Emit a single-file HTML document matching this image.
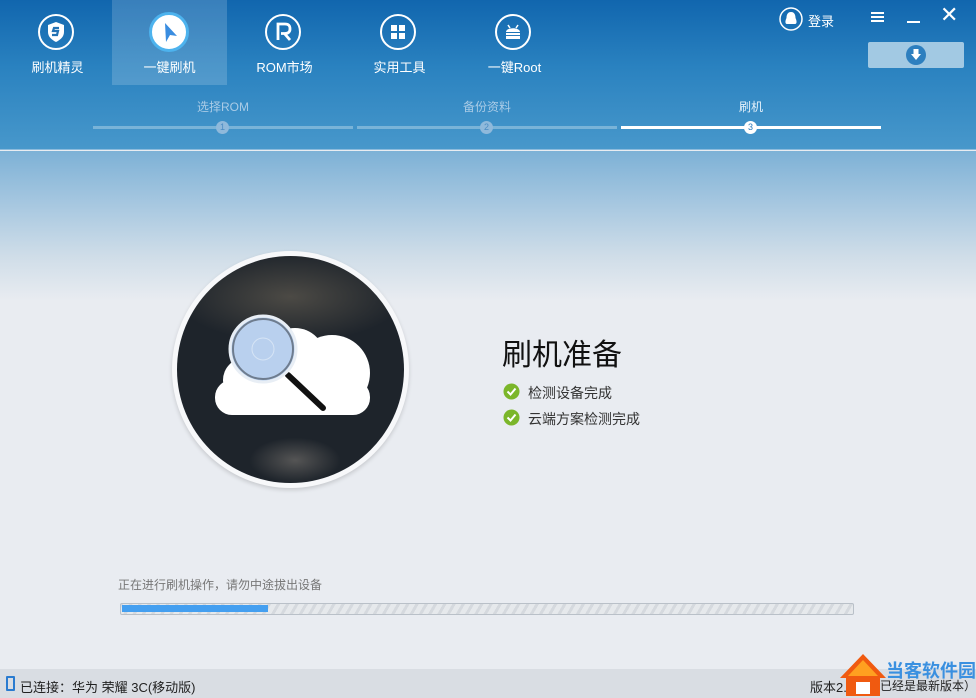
<!DOCTYPE html>
<html><head><meta charset="utf-8"><style>
*{margin:0;padding:0;box-sizing:border-box}
html,body{width:976px;height:698px;overflow:hidden}
body{font-family:"Liberation Sans","Noto Sans CJK SC",sans-serif;background:#e9ecf1;position:relative;white-space:nowrap}
#hdr{position:absolute;left:0;top:0;width:976px;height:150px;background:linear-gradient(180deg,#1166ae 0%,#2a82c0 45%,#4898cb 100%)}
#hdr:after{content:"";position:absolute;left:0;right:0;bottom:0;height:1px;background:#8cbbdc}
#sky{position:absolute;left:0;top:151px;width:976px;height:150px;background:linear-gradient(180deg,#7db1d6 0%,#a6c7e0 35%,#cfdde8 70%,#e9ecf1 100%)}
.nav{position:absolute;top:0;width:115px;height:85px;text-align:center;color:#fff;font-size:13px}
.nav.act{background:rgba(255,255,255,.17)}
.nav .ic{position:absolute;left:38px;top:14px;width:36px;height:36px;border:2px solid #fff;border-radius:50%}
.nav .lb{position:absolute;left:0;right:0;top:57px}
.step{position:absolute;top:98px;font-size:12px;color:#a9cbe6;text-align:center;width:260px}
.bar{position:absolute;top:126px;height:3px;background:rgba(255,255,255,.3)}
.dot{position:absolute;top:121px;width:13px;height:13px;border-radius:50%;background:#8fb9db;color:#4b8cc3;font-size:9px;text-align:center;line-height:13px}
#foot{position:absolute;left:0;top:669px;width:976px;height:29px;background:#d9dde3;font-size:13px;color:#222;overflow:hidden}
</style></head><body>
<div id="hdr"></div><div id="sky"></div>

<div class="nav" style="left:0"><div class="ic"><svg width="32" height="32" viewBox="0 0 32 32"><path d="M16 6 L24 9 V16 C24 21 20 24 16 26 C12 24 8 21 8 16 V9 Z" fill="#fff"/><path d="M19 12 H14 L13 15 H18 L17 19 H12" stroke="#2272b4" stroke-width="2.2" fill="none"/></svg></div><div class="lb">刷机精灵</div></div>
<div class="nav act" style="left:112px"><div class="ic" style="background:#fff;border:3px solid #4db3ee;left:37px;top:12px;width:40px;height:40px"><svg width="34" height="34" viewBox="0 0 34 34"><path d="M13 8 L25 21 L18 20 L14 27 Z" fill="#3a8de0"/></svg></div><div class="lb">一键刷机</div></div>
<div class="nav" style="left:227px"><div class="ic"><svg width="32" height="32" viewBox="0 0 32 32"><path d="M11 24 V8 H18 C22 8 23 10 23 13 C23 16 21 17.5 18 17.5 H14 M17 17 L23 24" stroke="#fff" stroke-width="2.8" fill="none"/></svg></div><div class="lb">ROM市场</div></div>
<div class="nav" style="left:342px"><div class="ic"><svg width="32" height="32" viewBox="0 0 32 32"><rect x="9" y="9" width="6" height="6" fill="#fff"/><rect x="17" y="9" width="6" height="6" fill="#fff"/><rect x="9" y="17" width="6" height="6" fill="#fff"/><rect x="17" y="17" width="6" height="6" fill="#fff"/></svg></div><div class="lb">实用工具</div></div>
<div class="nav" style="left:457px"><div class="ic"><svg width="32" height="32" viewBox="0 0 32 32"><path d="M9 16 C9 11 23 11 23 16 Z M9 17 H23 V23 H9 Z" fill="#fff"/><path d="M11 9 L13 12 M21 9 L19 12" stroke="#fff" stroke-width="1.5"/><path d="M9 19.5 H23" stroke="#2a7bbd" stroke-width="1"/></svg></div><div class="lb">一键Root</div></div>

<svg style="position:absolute;left:779px;top:7px" width="24" height="24" viewBox="0 0 24 24"><circle cx="12" cy="12" r="11" fill="none" stroke="#fff" stroke-width="1.5"/><path d="M12 5 C8 5 7.5 9 7.5 11 C6 14 6 17 8 17 L16 17 C18 17 18 14 16.5 11 C16.5 9 16 5 12 5Z" fill="#fff"/></svg>
<div style="position:absolute;left:808px;top:11px;color:#fff;font-size:13px">登录</div>
<div style="position:absolute;left:871px;top:12px;width:13px;height:2px;background:#fff;box-shadow:0 4px 0 #fff,0 8px 0 #fff"></div>
<div style="position:absolute;left:907px;top:21px;width:13px;height:2px;background:#fff"></div>
<div style="position:absolute;left:940px;top:2px;color:#fff;font-size:22px">✕</div>
<div style="position:absolute;left:868px;top:42px;width:96px;height:26px;background:#a2c9e3;border-radius:2px"></div>
<svg style="position:absolute;left:905px;top:44px" width="22" height="22" viewBox="0 0 22 22"><circle cx="11" cy="11" r="10" fill="#2d7fbf"/><path d="M8.5 5 H13.5 V10 H16 L11 16 L6 10 H8.5 Z" fill="#fff"/></svg>

<div class="step" style="left:93px">选择ROM</div>
<div class="step" style="left:357px">备份资料</div>
<div class="step" style="left:621px;color:#e6f1fa">刷机</div>
<div class="bar" style="left:93px;width:260px"></div>
<div class="bar" style="left:357px;width:260px"></div>
<div class="bar" style="left:621px;width:260px;background:#fff"></div>
<div class="dot" style="left:216px">1</div>
<div class="dot" style="left:480px">2</div>
<div class="dot" style="left:744px;background:#fff;color:#2a7bbd">3</div>

<div style="position:absolute;left:172px;top:251px;width:237px;height:237px;border-radius:50%;background:#f7f8fa;box-shadow:0 2px 4px rgba(0,0,0,.15)"></div>
<div style="position:absolute;left:177px;top:256px;width:227px;height:227px;border-radius:50%;background:radial-gradient(ellipse 50% 20% at 50% 18%,#4c4a45 0%,rgba(40,44,48,0) 100%),radial-gradient(ellipse 20% 10% at 52% 90%,#555 0%,rgba(0,0,0,0) 100%),#1e242b"></div>
<svg style="position:absolute;left:177px;top:256px" width="227" height="227" viewBox="0 0 227 227">
<g fill="#fff">
<rect x="38" y="124" width="155" height="35" rx="17"/>
<circle cx="155" cy="117" r="38"/>
<circle cx="118" cy="102" r="30"/>
<circle cx="68" cy="124" r="22"/>
</g>
<path d="M111 119 L146 152" stroke="#111" stroke-width="6" stroke-linecap="round"/>
<circle cx="86" cy="93" r="33" fill="#b9d0ee" stroke="#e8eef5" stroke-width="3"/>
<circle cx="86" cy="93" r="30" fill="none" stroke="#6e7c8e" stroke-width="2"/>
<circle cx="86" cy="93" r="11" fill="none" stroke="#d6e4f5" stroke-width="1"/>
</svg>

<div style="position:absolute;left:502px;top:330px;font-size:30px;color:#111">刷机准备</div>
<svg style="position:absolute;left:503px;top:383px" width="17" height="17"><circle cx="8.5" cy="8.5" r="8" fill="#7bb62a"/><path d="M4.5 8.5 L7.5 11.5 L12.5 5.5" stroke="#fff" stroke-width="2" fill="none"/></svg>
<svg style="position:absolute;left:503px;top:409px" width="17" height="17"><circle cx="8.5" cy="8.5" r="8" fill="#7bb62a"/><path d="M4.5 8.5 L7.5 11.5 L12.5 5.5" stroke="#fff" stroke-width="2" fill="none"/></svg>
<div style="position:absolute;left:528px;top:383px;font-size:14px;color:#333">检测设备完成</div>
<div style="position:absolute;left:528px;top:409px;font-size:14px;color:#333">云端方案检测完成</div>

<div style="position:absolute;left:118px;top:576px;font-size:12px;color:#777">正在进行刷机操作，请勿中途拔出设备</div>
<div style="position:absolute;left:120px;top:603px;width:734px;height:12px;border:1px solid #b9c0c8;border-radius:2px;background:repeating-linear-gradient(-60deg,#e6e9ec 0 5px,#d5d9de 5px 8px)"></div>
<div style="position:absolute;left:122px;top:605px;width:146px;height:7px;background:#449ff0"></div>

<div id="foot">
<div style="position:absolute;left:6px;top:7px;width:9px;height:15px;border:2px solid #2a7bd0;border-radius:1px"></div>
<div style="position:absolute;left:20px;top:8px">已连接：华为 荣耀 3C(移动版)</div>
<div style="position:absolute;left:810px;top:8px">版本2.</div>
<div style="position:absolute;left:880px;top:8px;font-size:12px">已经是最新版本）</div>
</div>
<svg style="position:absolute;left:838px;top:652px" width="50" height="46"><path d="M25 2 L48 26 H42 V44 H8 V26 H2 Z" fill="#f05a10"/><path d="M25 8 L40 24 H10 Z" fill="#ffa020"/><rect x="18" y="30" width="14" height="12" fill="#fff"/></svg>
<div style="position:absolute;left:886px;top:657px;font-size:18px;font-weight:bold;color:#3a90e0">当客软件园</div>
</body></html>
